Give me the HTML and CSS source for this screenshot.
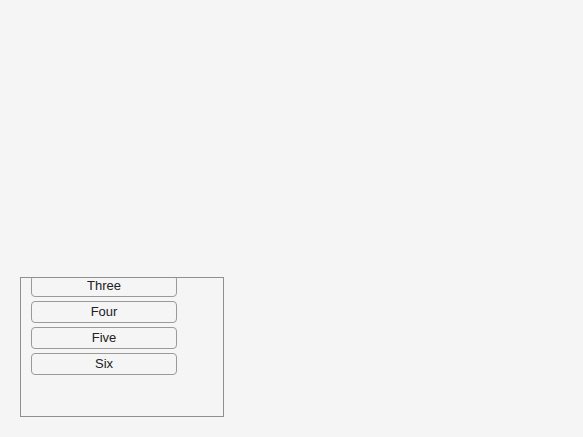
FILE: index.html
```html
<!DOCTYPE html>
<html>
<head>
<meta charset="utf-8">
<link rel="stylesheet" href="styles.css">
</head>
<body>
<div class="page">
  <div class="scroller" id="scroller">
    <div class="list">
      <button class="item">One</button>
      <button class="item">Two</button>
      <button class="item">Three</button>
      <button class="item">Four</button>
      <button class="item">Five</button>
      <button class="item">Six</button>
    </div>
  </div>
</div>
<script src="script.js"></script>
</body>
</html>
```
FILE: styles.css
```css
html, body {
  margin: 0;
  padding: 0;
  background: #f5f5f5;
  font-family: "Liberation Sans", Arial, sans-serif;
}
.page {
  padding: 277px 0 0 20px;
}
.scroller {
  width: 202px;
  height: 138px;
  border: 1px solid #8f8f8f;
  overflow: hidden;
}
.list {
  display: flex;
  flex-direction: column;
  gap: 4px;
  padding: 10px 10px 41px 10px;
}
.item {
  width: 146px;
  height: 22px;
  box-sizing: border-box;
  margin: 0;
  padding: 0;
  border: 1px solid #9a9a9a;
  border-radius: 4px;
  background: #f5f5f5;
  color: #222;
  font-family: "Liberation Sans", Arial, sans-serif;
  font-size: 13px;
  line-height: 20px;
  text-align: center;
}
```
FILE: script.js
```js
document.getElementById('scroller').scrollTop = 65;
```
